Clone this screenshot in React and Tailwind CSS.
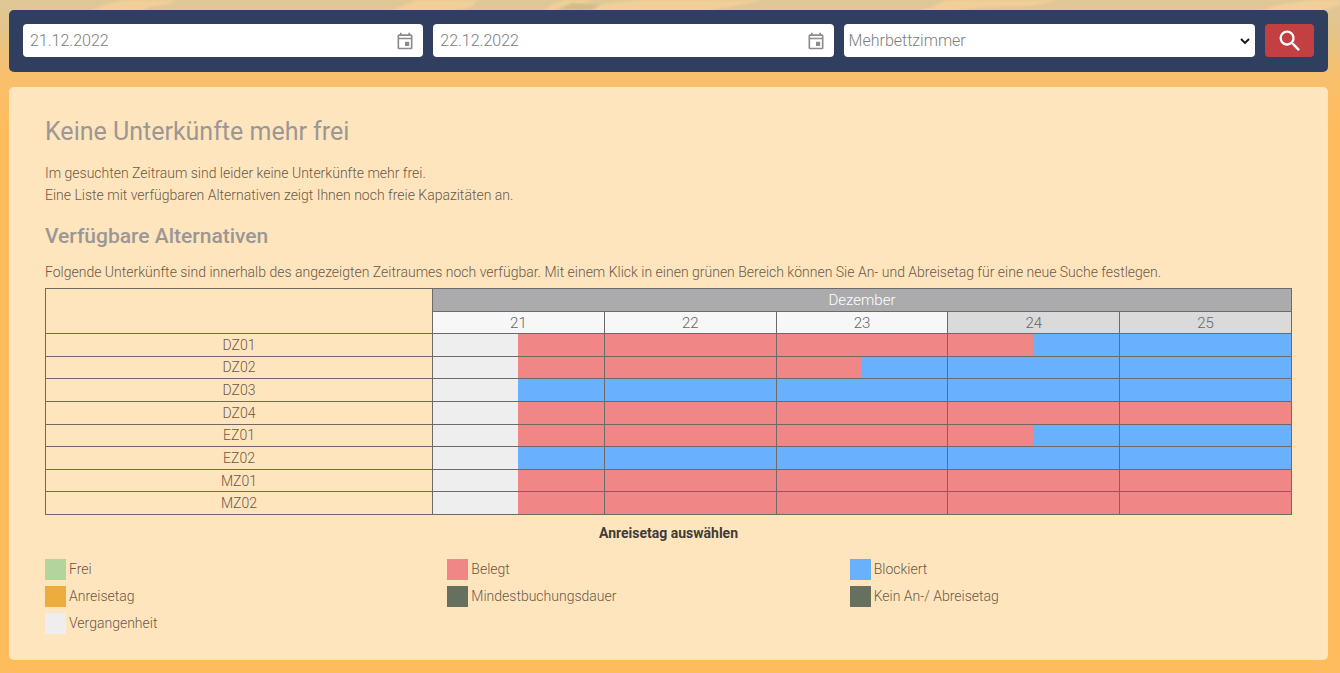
import { useState } from 'react';
import { MdOutlineEvent, MdSearch } from 'react-icons/md';

const DAYS = [
  { day: 21, weekend: false },
  { day: 22, weekend: false },
  { day: 23, weekend: false },
  { day: 24, weekend: true },
  { day: 25, weekend: true },
];

// two letters per day: p = past, b = booked, x = blocked
const ROOMS = [
  { name: 'DZ01', days: ['pb', 'bb', 'bb', 'bx', 'xx'] },
  { name: 'DZ02', days: ['pb', 'bb', 'bx', 'xx', 'xx'] },
  { name: 'DZ03', days: ['px', 'xx', 'xx', 'xx', 'xx'] },
  { name: 'DZ04', days: ['pb', 'bb', 'bb', 'bb', 'bb'] },
  { name: 'EZ01', days: ['pb', 'bb', 'bb', 'bx', 'xx'] },
  { name: 'EZ02', days: ['px', 'xx', 'xx', 'xx', 'xx'] },
  { name: 'MZ01', days: ['pb', 'bb', 'bb', 'bb', 'bb'] },
  { name: 'MZ02', days: ['pb', 'bb', 'bb', 'bb', 'bb'] },
];

const CELL_COLORS = {
  pb: 'bg-linear-to-r from-[#eeeeee] from-50% to-[#f08686] to-50%',
  px: 'bg-linear-to-r from-[#eeeeee] from-50% to-[#69b0ff] to-50%',
  bx: 'bg-linear-to-r from-[#f08686] from-50% to-[#69b0ff] to-50%',
  bb: 'bg-[#f08686]',
  xx: 'bg-[#69b0ff]',
};

const LEGEND = [
  { label: 'Frei', color: 'bg-[#b2d59c]' },
  { label: 'Belegt', color: 'bg-[#f08686]' },
  { label: 'Blockiert', color: 'bg-[#69b0ff]' },
  { label: 'Anreisetag', color: 'bg-[#ecac3e]' },
  { label: 'Mindestbuchungsdauer', color: 'bg-[#67705f]' },
  { label: 'Kein An-/ Abreisetag', color: 'bg-[#67705f]' },
  { label: 'Vergangenheit', color: 'bg-[#eeeeee]' },
];

function Sky() {
  return (
    <svg className="absolute inset-x-0 top-0 -z-10 h-24 w-full" viewBox="0 0 1340 96" preserveAspectRatio="none" aria-hidden="true">
      <defs>
        <filter id="soft"><feGaussianBlur stdDeviation="1" /></filter>
      </defs>
      <g filter="url(#soft)" fill="#f0cf98">
        <path d="M88 12L104 5L124 0H176L166 5L150 7L140 12Z" />
        <path d="M385 12L402 6L418 0H478L470 8L440 12Z" />
        <path d="M542 12L552 4L566 0H592L580 6L562 12Z" />
        <path d="M590 12L602 4L640 0H765L735 6L700 12Z" />
        <path d="M912 12L932 7L946 0H1060L1030 6L975 8L950 12Z" />
        <path d="M1255 12L1278 5L1310 0H1340V5L1318 12Z" />
      </g>
      <g filter="url(#soft)" fill="#d2bd88">
        <path d="M556 10L572 3L600 5L590 10Z" />
      </g>
    </svg>
  );
}

function DateField({ label, value, onChange }) {
  return (
    <div className="flex h-[33px] min-w-0 items-center rounded bg-white pr-2">
      <input
        type="text"
        aria-label={label}
        value={value}
        onChange={(e) => onChange(e.target.value)}
        className="min-w-0 flex-1 bg-transparent pl-[7px] leading-6 outline-none"
      />
      <MdOutlineEvent className="size-5 shrink-0 text-[#8c8c8c]" />
    </div>
  );
}

function SearchBar() {
  const [arrival, setArrival] = useState('21.12.2022');
  const [departure, setDeparture] = useState('22.12.2022');

  return (
    <form
      onSubmit={(e) => e.preventDefault()}
      className="grid grid-cols-[36fr_36fr_37fr_49px] gap-[10px] rounded-[5px] bg-[#303f5f] px-[14px] pt-[14px] pb-[15px] text-base text-[#7d7d7d]"
    >
      <DateField label="Anreise" value={arrival} onChange={setArrival} />
      <DateField label="Abreise" value={departure} onChange={setDeparture} />
      <div className="relative min-w-0">
        <select aria-label="Kategorie" className="h-[33px] w-full appearance-none rounded bg-white pl-[5px] pr-6 outline-none">
          <option>Mehrbettzimmer</option>
        </select>
        <svg className="pointer-events-none absolute top-3 right-[5px] size-[10px]" viewBox="0 0 10 10" fill="none" stroke="#111111" strokeWidth="1.8" aria-hidden="true">
          <path d="M1 3L5 7L9 3" />
        </svg>
      </div>
      <button type="submit" aria-label="Suchen" className="flex h-[33px] items-center justify-center rounded bg-[#c34042] text-white">
        <MdSearch className="size-7" />
      </button>
    </form>
  );
}

function Calendar() {
  return (
    <table className="h-[227px] w-full table-fixed border-collapse text-center leading-5">
      <colgroup>
        <col className="w-[387px]" />
        {DAYS.map((d) => <col key={d.day} />)}
      </colgroup>
      <thead className="text-[15px]">
        <tr className="h-[23px]">
          <td rowSpan={2} className="border border-[#6f6a68]" />
          <th colSpan={5} className="border border-[#6f6a68] bg-[#ababae] p-0 font-light text-white">Dezember</th>
        </tr>
        <tr className="h-[22px]">
          {DAYS.map((d) => (
            <th key={d.day} className={`border border-[#6f6a68] p-0 font-light text-[#666666] ${d.weekend ? 'bg-[#dadada]' : 'bg-[#f7f7f7]'}`}>
              {d.day}
            </th>
          ))}
        </tr>
      </thead>
      <tbody>
        {ROOMS.map((room) => (
          <tr key={room.name}>
            <th className="border border-[#6f6a68] p-0 font-light">{room.name}</th>
            {room.days.map((state, i) => (
              <td key={DAYS[i].day} className={`border border-[#6f6a68] bg-clip-padding p-0 ${CELL_COLORS[state]}`} />
            ))}
          </tr>
        ))}
      </tbody>
    </table>
  );
}

export default function App() {
  return (
    <div className="relative isolate min-h-screen bg-[#ffbc5c] bg-[linear-gradient(to_bottom,#dfc797_0px,#e3c58a_30px,#f8c06c_76px,#ffbc5c_130px)] pt-[10px] pr-3 pb-[13px] pl-[9px] font-['Roboto',sans-serif] font-light">
      <Sky />
      <SearchBar />
      <main className="mt-[15px] rounded-[5px] bg-[#ffe5bd] px-9 pt-[29px] pb-[26px] text-sm leading-[22px] text-[#6b5948]">
        <h1 className="text-[25px] leading-8 font-normal text-[#9b9795]">Keine Unterkünfte mehr frei</h1>
        <p className="mt-[14px]">
          Im gesuchten Zeitraum sind leider keine Unterkünfte mehr frei.
          <br />
          Eine Liste mit verfügbaren Alternativen zeigt Ihnen noch freie Kapazitäten an.
        </p>
        <h2 className="mt-4 text-[21px] leading-7 font-medium text-[#9b9795]">Verfügbare Alternativen</h2>
        <p className="mt-[11px] mb-[5px]">
          Folgende Unterkünfte sind innerhalb des angezeigten Zeitraumes noch verfügbar. Mit einem Klick in einen grünen Bereich können Sie An- und Abreisetag für eine neue Suche festlegen.
        </p>
        <Calendar />
        <p className="mt-[7px] text-center font-bold text-[#403c38]">Anreisetag auswählen</p>
        <ul className="mt-[14px] grid grid-cols-3 gap-y-[5px] pr-10">
          {LEGEND.map((item) => (
            <li key={item.label} className="flex items-center gap-[3px]">
              <span className={`size-[21px] ${item.color}`} />
              {item.label}
            </li>
          ))}
        </ul>
      </main>
    </div>
  );
}
